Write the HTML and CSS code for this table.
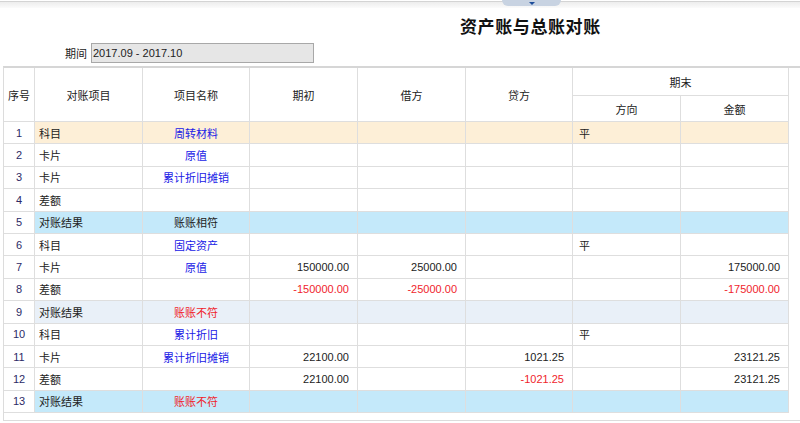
FILE: index.html
```html
<!DOCTYPE html>
<html lang="zh-CN">
<head>
<meta charset="utf-8">
<title>资产账与总账对账</title>
<link rel="stylesheet" href="styles.css">
</head>
<body>
<div class="topstrip">
  <div class="toptab"><span class="tri"></span></div>
</div>
<h1 class="title">资产账与总账对账</h1>
<div class="period">
  <label class="period-label" for="period">期间</label>
  <input class="period-input" id="period" type="text" value="2017.09 - 2017.10" readonly>
</div>
<div class="grid-wrap">
  <div class="grid">
    <div class="c h span2">序号</div>
    <div class="c h span2">对账项目</div>
    <div class="c h span2">项目名称</div>
    <div class="c h span2">期初</div>
    <div class="c h span2">借方</div>
    <div class="c h span2">贷方</div>
    <div class="c h colspan2">期末</div>
    <div class="c h">方向</div>
    <div class="c h">金额</div>

    <div class="c seq">1</div>
    <div class="c l peach">科目</div>
    <div class="c m blue peach">周转材料</div>
    <div class="c r peach"></div>
    <div class="c r peach"></div>
    <div class="c r peach"></div>
    <div class="c l2 peach">平</div>
    <div class="c r peach"></div>

    <div class="c seq">2</div>
    <div class="c l">卡片</div>
    <div class="c m blue">原值</div>
    <div class="c r"></div><div class="c r"></div><div class="c r"></div><div class="c l2"></div><div class="c r"></div>

    <div class="c seq">3</div>
    <div class="c l">卡片</div>
    <div class="c m blue">累计折旧摊销</div>
    <div class="c r"></div><div class="c r"></div><div class="c r"></div><div class="c l2"></div><div class="c r"></div>

    <div class="c seq">4</div>
    <div class="c l">差额</div>
    <div class="c m"></div>
    <div class="c r"></div><div class="c r"></div><div class="c r"></div><div class="c l2"></div><div class="c r"></div>

    <div class="c seq">5</div>
    <div class="c l sky">对账结果</div>
    <div class="c m sky">账账相符</div>
    <div class="c r sky"></div><div class="c r sky"></div><div class="c r sky"></div><div class="c l2 sky"></div><div class="c r sky"></div>

    <div class="c seq">6</div>
    <div class="c l">科目</div>
    <div class="c m blue">固定资产</div>
    <div class="c r"></div><div class="c r"></div><div class="c r"></div><div class="c l2">平</div><div class="c r"></div>

    <div class="c seq">7</div>
    <div class="c l">卡片</div>
    <div class="c m blue">原值</div>
    <div class="c r">150000.00</div><div class="c r">25000.00</div><div class="c r"></div><div class="c l2"></div><div class="c r">175000.00</div>

    <div class="c seq">8</div>
    <div class="c l">差额</div>
    <div class="c m"></div>
    <div class="c r red">-150000.00</div><div class="c r red">-25000.00</div><div class="c r"></div><div class="c l2"></div><div class="c r red">-175000.00</div>

    <div class="c seq">9</div>
    <div class="c l pale">对账结果</div>
    <div class="c m red pale">账账不符</div>
    <div class="c r pale"></div><div class="c r pale"></div><div class="c r pale"></div><div class="c l2 pale"></div><div class="c r pale"></div>

    <div class="c seq">10</div>
    <div class="c l">科目</div>
    <div class="c m blue">累计折旧</div>
    <div class="c r"></div><div class="c r"></div><div class="c r"></div><div class="c l2">平</div><div class="c r"></div>

    <div class="c seq">11</div>
    <div class="c l">卡片</div>
    <div class="c m blue">累计折旧摊销</div>
    <div class="c r">22100.00</div><div class="c r"></div><div class="c r">1021.25</div><div class="c l2"></div><div class="c r">23121.25</div>

    <div class="c seq">12</div>
    <div class="c l">差额</div>
    <div class="c m"></div>
    <div class="c r">22100.00</div><div class="c r"></div><div class="c r red">-1021.25</div><div class="c l2"></div><div class="c r">23121.25</div>

    <div class="c seq">13</div>
    <div class="c l sky">对账结果</div>
    <div class="c m red sky">账账不符</div>
    <div class="c r sky"></div><div class="c r sky"></div><div class="c r sky"></div><div class="c l2 sky"></div><div class="c r sky"></div>
  </div>
</div>
</body>
</html>
```
FILE: styles.css
```css
* { box-sizing: border-box; }
html, body { margin: 0; padding: 0; background: #fff; }
body {
  font-family: "Liberation Sans", "Noto Sans CJK SC", sans-serif;
  font-size: 11px;
  color: #222;
  width: 800px;
  height: 423px;
  overflow: hidden;
}
.topstrip {
  position: relative;
  height: 8px;
  background: linear-gradient(#ffffff 0, #ffffff 1px, #d4d4d4 1px, #d4d4d4 2px, #ededed 2px, #fbfbfb 8px);
}
.toptab {
  position: absolute;
  left: 502px;
  top: 0;
  width: 59px;
  height: 6px;
  background: #c8d3e2;
  border-radius: 0 0 6px 6px;
  display: flex;
  justify-content: center;
  align-items: flex-start;
}
.tri {
  margin-top: 2px;
  width: 0;
  height: 0;
  border-left: 3px solid transparent;
  border-right: 3px solid transparent;
  border-top: 3px solid #1d4d9a;
}
.title {
  margin: 0;
  height: 35px;
  padding-left: 460px;
  padding-top: 8px;
  font-family: "Noto Sans CJK SC", sans-serif;
  font-size: 17px;
  line-height: 20px;
  font-weight: bold;
  color: #111;
  letter-spacing: 0.6px;
}
.period {
  display: flex;
  align-items: center;
  height: 20px;
  padding-left: 65px;
  gap: 4px;
}
.period-label {
  font-family: "Noto Sans CJK SC", sans-serif;
  font-size: 11px;
  color: #222;
}
.period-input {
  width: 223px;
  height: 20px;
  margin: 0;
  padding: 0 1px;
  border: 1px solid #a8a8a8;
  background: #e6e6e6;
  font-family: "Liberation Sans", sans-serif;
  font-size: 11px;
  color: #222;
  outline: none;
}
.grid-wrap {
  margin: 3px 0 0 3px;
  height: 355px;
  border-top: 2px solid #d6d6d6;
  border-left: 1px solid #dcdcdc;
  border-bottom: 1px solid #dcdcdc;
}
.grid {
  display: grid;
  width: 785px;
  grid-template-columns: 31px 108px 107px 108px 108px 107px 108px 108px;
  grid-template-rows: 28px 26px repeat(13, 22.4px);
}
.c {
  border-right: 1px solid #dedede;
  border-bottom: 1px solid #dedede;
  display: flex;
  align-items: center;
  white-space: nowrap;
  overflow: hidden;
  font-size: 11px;
}
.h { justify-content: center; font-family: "Noto Sans CJK SC", sans-serif; }
.span2 { grid-row: span 2; }
.colspan2 { grid-column: span 2; }
.seq { justify-content: center; color: #2c2a66; }
.l { padding-left: 4px; font-family: "Noto Sans CJK SC", sans-serif; }
.l2 { padding-left: 6px; font-family: "Noto Sans CJK SC", sans-serif; }
.m { justify-content: center; font-family: "Noto Sans CJK SC", sans-serif; }
.r { justify-content: flex-end; padding-right: 8px; }
.blue { color: #2020e6; }
.red { color: #f01e2c; }
.peach { background: #fdefd7; }
.sky { background: #c4e9fa; }
.pale { background: #e9f0f8; }
```
